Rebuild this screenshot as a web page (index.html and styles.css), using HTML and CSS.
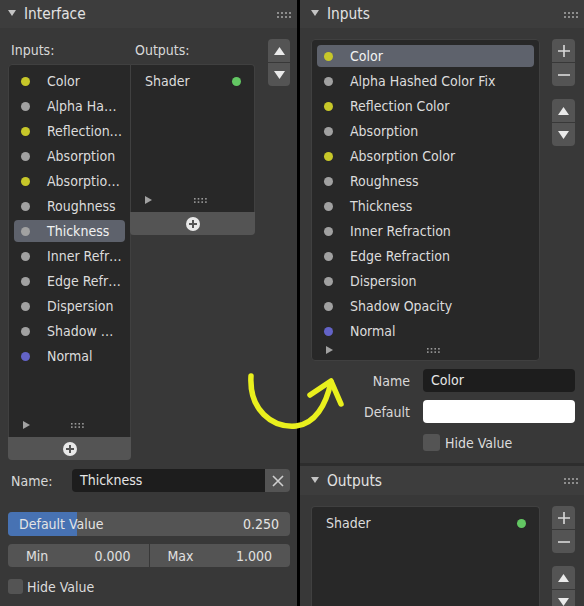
FILE: index.html
```html
<!DOCTYPE html>
<html>
<head>
<meta charset="utf-8">
<link rel="stylesheet" href="styles.css">
</head>
<body>
<div class="app">
  <!-- LEFT PANE -->
  <div class="pane-left">
    <div class="phead">
      <svg class="tri-down" width="8" height="7" viewBox="0 0 8 7"><polygon points="0,0 8,0 4,6" /></svg>
      <span class="ptitle">Interface</span>
      <svg class="grip" width="14" height="6" viewBox="0 0 14 6"><g><rect x="0" y="0" width="2" height="2"/><rect x="4" y="0" width="2" height="2"/><rect x="8" y="0" width="2" height="2"/><rect x="12" y="0" width="2" height="2"/><rect x="0" y="4" width="2" height="2"/><rect x="4" y="4" width="2" height="2"/><rect x="8" y="4" width="2" height="2"/><rect x="12" y="4" width="2" height="2"/></g></svg>
    </div>
    <div class="lbody">
      <div class="lrow">
        <div class="lcols">
          <div class="lcol lcol-in">
            <div class="collabel">Inputs:</div>
            <div class="box box-in">
              <div class="list list-in">
                <div class="item"><span class="dot y"></span><span>Color</span></div>
                <div class="item"><span class="dot g"></span><span>Alpha Ha…</span></div>
                <div class="item"><span class="dot y"></span><span>Reflection…</span></div>
                <div class="item"><span class="dot g"></span><span>Absorption</span></div>
                <div class="item"><span class="dot y"></span><span>Absorptio…</span></div>
                <div class="item"><span class="dot g"></span><span>Roughness</span></div>
                <div class="item sel"><span class="dot g"></span><span>Thickness</span></div>
                <div class="item"><span class="dot g"></span><span>Inner Refr…</span></div>
                <div class="item"><span class="dot g"></span><span>Edge Refr…</span></div>
                <div class="item"><span class="dot g"></span><span>Dispersion</span></div>
                <div class="item"><span class="dot g"></span><span>Shadow …</span></div>
                <div class="item"><span class="dot b"></span><span>Normal</span></div>
                <div class="lfoot">
                  <svg class="tri-right" width="7" height="8" viewBox="0 0 7 8"><polygon points="0,0 7,4 0,8"/></svg>
                  <span class="lgrip"><svg width="13" height="5" viewBox="0 0 13 5"><rect x="0" y="0" width="1.6" height="1.6"/><rect x="3.7" y="0" width="1.6" height="1.6"/><rect x="7.4" y="0" width="1.6" height="1.6"/><rect x="11.1" y="0" width="1.6" height="1.6"/><rect x="0" y="3.3" width="1.6" height="1.6"/><rect x="3.7" y="3.3" width="1.6" height="1.6"/><rect x="7.4" y="3.3" width="1.6" height="1.6"/><rect x="11.1" y="3.3" width="1.6" height="1.6"/></svg></span>
                </div>
              </div>
              <div class="addbar"><span class="addicon"></span></div>
            </div>
          </div>
          <div class="lcol lcol-out">
            <div class="collabel">Outputs:</div>
            <div class="box box-out">
              <div class="list list-out">
                <div class="item oitem"><span>Shader</span><span class="dot gr"></span></div>
                <div class="lfoot">
                  <svg class="tri-right" width="7" height="8" viewBox="0 0 7 8"><polygon points="0,0 7,4 0,8"/></svg>
                  <span class="lgrip"><svg width="13" height="5" viewBox="0 0 13 5"><rect x="0" y="0" width="1.6" height="1.6"/><rect x="3.7" y="0" width="1.6" height="1.6"/><rect x="7.4" y="0" width="1.6" height="1.6"/><rect x="11.1" y="0" width="1.6" height="1.6"/><rect x="0" y="3.3" width="1.6" height="1.6"/><rect x="3.7" y="3.3" width="1.6" height="1.6"/><rect x="7.4" y="3.3" width="1.6" height="1.6"/><rect x="11.1" y="3.3" width="1.6" height="1.6"/></svg></span>
                </div>
              </div>
              <div class="addbar"><span class="addicon"></span></div>
            </div>
          </div>
        </div>
        <div class="btncol">
          <div class="btngroup">
            <div class="btn"><svg width="11" height="8" viewBox="0 0 11 8"><polygon points="0,8 11,8 5.5,0"/></svg></div>
            <div class="btn"><svg width="11" height="8" viewBox="0 0 11 8"><polygon points="0,0 11,0 5.5,8"/></svg></div>
          </div>
        </div>
      </div>

      <div class="namerow">
        <span class="nlabel">Name:</span>
        <div class="nfield">Thickness</div>
        <div class="xbtn"><svg width="12" height="12" viewBox="0 0 12 12"><path d="M1 1 L11 11 M11 1 L1 11"/></svg></div>
      </div>

      <div class="slider">
        <div class="sfill"></div>
        <span class="slabel">Default Value</span>
        <span class="sval">0.250</span>
      </div>

      <div class="minmax">
        <div class="mm"><span>Min</span><span>0.000</span></div>
        <div class="mm"><span>Max</span><span>1.000</span></div>
      </div>

      <div class="check"><span class="cbox"></span><span>Hide Value</span></div>
    </div>
  </div>

  <!-- RIGHT PANE -->
  <div class="pane-right">
    <div class="panel panel-inputs">
      <div class="phead">
        <svg class="tri-down" width="8" height="7" viewBox="0 0 8 7"><polygon points="0,0 8,0 4,6" /></svg>
        <span class="ptitle">Inputs</span>
        <svg class="grip" width="14" height="6" viewBox="0 0 14 6"><g><rect x="0" y="0" width="2" height="2"/><rect x="4" y="0" width="2" height="2"/><rect x="8" y="0" width="2" height="2"/><rect x="12" y="0" width="2" height="2"/><rect x="0" y="4" width="2" height="2"/><rect x="4" y="4" width="2" height="2"/><rect x="8" y="4" width="2" height="2"/><rect x="12" y="4" width="2" height="2"/></g></svg>
      </div>
      <div class="rbody">
        <div class="rrow">
          <div class="box rbox">
            <div class="list rlist">
              <div class="item sel"><span class="dot y"></span><span>Color</span></div>
              <div class="item"><span class="dot g"></span><span>Alpha Hashed Color Fix</span></div>
              <div class="item"><span class="dot y"></span><span>Reflection Color</span></div>
              <div class="item"><span class="dot g"></span><span>Absorption</span></div>
              <div class="item"><span class="dot y"></span><span>Absorption Color</span></div>
              <div class="item"><span class="dot g"></span><span>Roughness</span></div>
              <div class="item"><span class="dot g"></span><span>Thickness</span></div>
              <div class="item"><span class="dot g"></span><span>Inner Refraction</span></div>
              <div class="item"><span class="dot g"></span><span>Edge Refraction</span></div>
              <div class="item"><span class="dot g"></span><span>Dispersion</span></div>
              <div class="item"><span class="dot g"></span><span>Shadow Opacity</span></div>
              <div class="item"><span class="dot b"></span><span>Normal</span></div>
              <div class="lfoot rfoot">
                <svg class="tri-right" width="7" height="8" viewBox="0 0 7 8"><polygon points="0,0 7,4 0,8"/></svg>
                <span class="lgrip"><svg width="13" height="5" viewBox="0 0 13 5"><rect x="0" y="0" width="1.6" height="1.6"/><rect x="3.7" y="0" width="1.6" height="1.6"/><rect x="7.4" y="0" width="1.6" height="1.6"/><rect x="11.1" y="0" width="1.6" height="1.6"/><rect x="0" y="3.3" width="1.6" height="1.6"/><rect x="3.7" y="3.3" width="1.6" height="1.6"/><rect x="7.4" y="3.3" width="1.6" height="1.6"/><rect x="11.1" y="3.3" width="1.6" height="1.6"/></svg></span>
              </div>
            </div>
          </div>
          <div class="btncol rbtncol">
            <div class="btngroup">
              <div class="btn"><svg width="12" height="12" viewBox="0 0 12 12"><path class="stk" d="M6 0 V12 M0 6 H12"/></svg></div>
              <div class="btn"><svg width="12" height="12" viewBox="0 0 12 12"><path class="stk" d="M0 6 H12"/></svg></div>
            </div>
            <div class="btngroup">
              <div class="btn"><svg width="11" height="8" viewBox="0 0 11 8"><polygon points="0,8 11,8 5.5,0"/></svg></div>
              <div class="btn"><svg width="11" height="8" viewBox="0 0 11 8"><polygon points="0,0 11,0 5.5,8"/></svg></div>
            </div>
          </div>
        </div>
        <div class="form">
          <span class="flabel">Name</span>
          <div class="nfield rfield">Color</div>
          <span class="flabel">Default</span>
          <div class="colorfield"></div>
          <span></span>
          <div class="check rcheck"><span class="cbox"></span><span>Hide Value</span></div>
        </div>
      </div>
    </div>

    <div class="panel panel-outputs">
      <div class="phead">
        <svg class="tri-down" width="8" height="7" viewBox="0 0 8 7"><polygon points="0,0 8,0 4,6" /></svg>
        <span class="ptitle">Outputs</span>
        <svg class="grip" width="14" height="6" viewBox="0 0 14 6"><g><rect x="0" y="0" width="2" height="2"/><rect x="4" y="0" width="2" height="2"/><rect x="8" y="0" width="2" height="2"/><rect x="12" y="0" width="2" height="2"/><rect x="0" y="4" width="2" height="2"/><rect x="4" y="4" width="2" height="2"/><rect x="8" y="4" width="2" height="2"/><rect x="12" y="4" width="2" height="2"/></g></svg>
      </div>
      <div class="rbody">
        <div class="rrow">
          <div class="box rbox obox">
            <div class="list">
              <div class="item oitem"><span>Shader</span><span class="dot gr"></span></div>
            </div>
          </div>
          <div class="btncol rbtncol">
            <div class="btngroup">
              <div class="btn"><svg width="12" height="12" viewBox="0 0 12 12"><path class="stk" d="M6 0 V12 M0 6 H12"/></svg></div>
              <div class="btn"><svg width="12" height="12" viewBox="0 0 12 12"><path class="stk" d="M0 6 H12"/></svg></div>
            </div>
            <div class="btngroup">
              <div class="btn"><svg width="11" height="8" viewBox="0 0 11 8"><polygon points="0,8 11,8 5.5,0"/></svg></div>
              <div class="btn"><svg width="11" height="8" viewBox="0 0 11 8"><polygon points="0,0 11,0 5.5,8"/></svg></div>
            </div>
          </div>
        </div>
      </div>
    </div>
  </div>
</div>

<svg class="arrow" width="584" height="606" viewBox="0 0 584 606">
  <path d="M251 376 C249 410 272 428 296 426 C315 424 326 405 331 382" />
  <path d="M310 395 L331 381 L341 404" />
</svg>
</body>
</html>
```

FILE: styles.css
```css
* { box-sizing: border-box; }
html, body { margin: 0; padding: 0; }
body {
  width: 584px;
  height: 606px;
  overflow: hidden;
  background: #000;
  position: relative;
  font-family: "DejaVu Sans Condensed", "DejaVu Sans", sans-serif;
  font-stretch: condensed;
  font-size: 14px;
  color: #dcdcdc;
}
.app { display: flex; gap: 3px; height: 606px; }

.pane-left { width: 297px; background: #383838; }
.pane-right { width: 284px; background: #2d2d2d; display: flex; flex-direction: column; gap: 3px; overflow: hidden; }
.panel { background: #383838; }
.panel-inputs { height: 463px; flex: none; }
.panel-outputs { flex: 1; min-height: 0; overflow: hidden; }

.phead {
  height: 28px;
  background: #3d3d3d;
  display: flex;
  align-items: center;
  padding: 0 6px 0 8px;
}
.panel .phead { padding-left: 11px; }
.panel-outputs .phead { height: 29px; }
.tri-down { fill: #c4c4c4; margin-top: -1px; flex: none; }
.ptitle { font-size: 15.3px; color: #e2e2e2; margin-left: 8px; flex: 1; }
.grip { fill: #8e8e8e; margin-top: 1px; flex: none; }

/* left body */
.lbody { padding: 11px 7px 0 8px; }
.lrow { display: flex; gap: 13px; }
.lcols { display: flex; }
.lcol-in { width: 123px; }
.lcol-out { width: 124px; }
.collabel { height: 25px; line-height: 23px; padding-left: 3px; color: #d8d8d8; }
.lcol-out .collabel { padding-left: 4px; }

.box { background: #282828; border: 1px solid #404040; }
.box-in { border-radius: 4px 0 4px 4px; }
.box-out { border-radius: 0 4px 4px 0; border-left: none; }
.list { display: flex; flex-direction: column; gap: 3px; padding: 5px 5px 0 5px; }
.list-in { height: 372px; }
.list-out { height: 147px; }

.item {
  height: 22px;
  flex: none;
  display: flex;
  align-items: center;
  padding-left: 7px;
  border-radius: 4px;
  white-space: nowrap;
  overflow: hidden;
}
.item.sel { background: #5e626c; color: #f2f2f2; }
.dot { width: 9px; height: 9px; border-radius: 50%; margin-right: 17px; flex: none; }
.dot.y { background: #c7c729; }
.dot.g { background: #a1a1a1; }
.dot.b { background: #6363c7; }
.dot.gr { background: #63c763; margin: 0 8px 0 auto; }
.oitem { padding-left: 9px; }

.lfoot { margin-top: auto; height: 20px; flex: none; display: flex; align-items: center; padding-left: 9px; margin-bottom: 2px; }
.tri-right { fill: #a2a2a2; flex: none; }
.lgrip { flex: 1; display: flex; justify-content: center; fill: #9a9a9a; }

.addbar {
  height: 23px;
  background: #545454;
  border-radius: 0 0 4px 4px;
  display: flex;
  align-items: center;
  justify-content: center;
  margin: 0 -1px -1px -1px;
}
.addicon {
  width: 14px; height: 14px; border-radius: 50%;
  background: #e8e8e8;
  position: relative;
}
.addicon::before, .addicon::after {
  content: ""; position: absolute; background: #545454;
}
.addicon::before { left: 3px; right: 3px; top: 6px; height: 2px; }
.addicon::after { top: 3px; bottom: 3px; left: 6px; width: 2px; }

.btncol { display: flex; flex-direction: column; gap: 13px; flex: none; }
.btngroup { display: flex; flex-direction: column; gap: 1px; width: 22px; }
.rbtncol .btngroup { width: 23px; }
.btn {
  height: 23px;
  background: #545454;
  display: flex; align-items: center; justify-content: center;
  fill: #eaeaea;
}
.btn:first-child { border-radius: 4px 4px 0 0; }
.btn:last-child { border-radius: 0 0 4px 4px; }
.stk { stroke: #dadada; stroke-width: 1.6; fill: none; }

.namerow { display: flex; align-items: center; margin-top: 9px; height: 23px; }
.nlabel { width: 64px; padding-left: 3px; color: #d8d8d8; }
.nfield {
  flex: 1; height: 23px; background: #1d1d1d; border-radius: 4px 0 0 4px;
  line-height: 23px; padding-left: 8px; color: #e6e6e6;
}
.xbtn {
  width: 25px; height: 23px; background: #545454; border-radius: 0 4px 4px 0;
  display: flex; align-items: center; justify-content: center;
}
.xbtn path { stroke: #cfcfcf; stroke-width: 1.6; fill: none; }

.slider {
  position: relative; margin-top: 20px; height: 24px; background: #545454; border-radius: 4px;
  display: flex; align-items: center; justify-content: space-between; padding: 0 11px;
  overflow: hidden;
}
.sfill { position: absolute; left: 0; top: 0; bottom: 0; width: 69px; background: #4772b3; }
.slabel, .sval { position: relative; color: #e4e4e4; }

.minmax { display: flex; gap: 1px; margin-top: 8px; height: 23px; }
.mm {
  flex: 1; background: #545454; display: flex; align-items: center; justify-content: space-between;
  padding: 0 18px;
  color: #e0e0e0;
}
.mm:first-child { border-radius: 4px 0 0 4px; }
.mm:last-child { border-radius: 0 4px 4px 0; }

.check { display: flex; align-items: center; gap: 4px; margin-top: 12px; height: 15px; color: #dcdcdc; }
.cbox { width: 15px; height: 15px; background: #545454; border-radius: 3px; flex: none; }

/* right body */
.rbody { padding: 11px 9px 0 11px; }
.rrow { display: flex; gap: 12px; }
.rbox { width: 229px; height: 322px; border-radius: 4px; flex: none; }
.rlist { height: 320px; }
.rfoot { height: 12px; margin-top: -1px; margin-bottom: auto; padding-left: 9px; }
.rbtncol { gap: 13px; }
.obox { height: 120px; border-bottom: none; border-radius: 4px 4px 0 0; }

.form {
  display: grid;
  grid-template-columns: 99px 152px;
  column-gap: 13px;
  row-gap: 8px;
  margin-top: 8px;
  align-items: center;
}
.flabel { text-align: right; color: #d8d8d8; }
.rfield { border-radius: 4px; height: 23px; }
.colorfield { height: 23px; background: #ffffff; border-radius: 4px; }
.rcheck { margin-top: 3px; height: 17px; gap: 5px; }
.rcheck .cbox { width: 17px; height: 17px; }

.arrow { position: absolute; left: 0; top: 0; pointer-events: none; }
.arrow path { fill: none; stroke: #e9f01d; stroke-width: 5.5; stroke-linecap: round; stroke-linejoin: round; }
```
